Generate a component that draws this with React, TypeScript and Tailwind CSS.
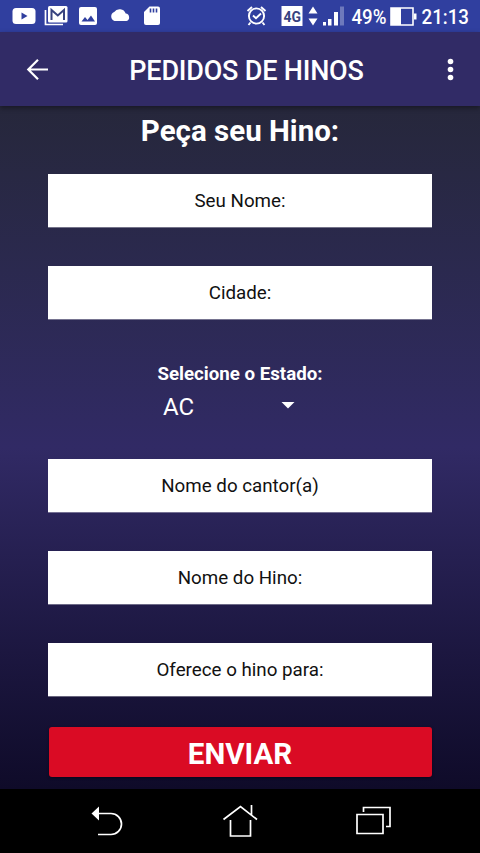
import React from "react";

function StatusBar() {
  return (
    <header className="flex h-8 shrink-0 items-center bg-[#303f9f] text-white">
      <svg width="480" height="32" viewBox="0 0 480 32" fill="#fff">
        <rect x="12.500" y="8" width="23" height="16" rx="3.500" />
        <path d="M21.500 12.500v7l6-3.500z" fill="#303f9f" />
        <path d="M45.500 10v14.500H63" fill="none" stroke="#fff" strokeWidth="1.700" />
        <rect x="48" y="6" width="19.500" height="16.500" rx="1.500" />
        <path d="M51.500 20V10l6.300 5.500L64 10v10" fill="none" stroke="#38437f" strokeWidth="2" />
        <rect x="79" y="7" width="18" height="18" rx="2" />
        <path d="M81.500 21.500l3.500-4.500 2.500 3 3.500-4.500 4 6z" fill="#303f9f" />
        <path d="M114.500 21a4.800 4.800 0 0 1-.3-9 6.500 6.500 0 0 1 11.500 1.600 3.800 3.800 0 0 1 .8 7.400z" />
        <path d="M149.500 6.500H158q2 0 2 2V23q0 2-2 2h-12q-2 0-2-2V12z" />
        <path d="M150.500 8.500v4M153.500 8.500v4M156.500 8.500v4" stroke="#303f9f" strokeWidth="1.600" />
        <g fill="none" stroke="#fff" strokeWidth="1.900">
          <circle cx="256.500" cy="16" r="7.600" />
          <path d="M247.500 11l4.500-4M265.500 11L261 7M250.500 22.500L248.500 25M262.500 22.500l2 2.500" />
          <path d="M253 15.500l3 2.700 5-4.700" />
        </g>
        <rect x="281.500" y="6" width="21" height="20" />
        <text x="283.500" y="21.500" textLength="17.500" lengthAdjust="spacingAndGlyphs" className="font-[Roboto] text-[15px] font-bold" fill="#38437f">4G</text>
        <path d="M308.500 13.500l4.500-7 4.500 7zM308.500 18.500l4.500 7 4.500-7z" />
        <path d="M323 22h3v3.500h-3zM328 19h3.500v6.500H328zM334 12h4v13.500h-4z" />
        <path d="M340 6.500h4v19h-4z" opacity=".3" />
        <text x="351.500" y="23.500" textLength="35" lengthAdjust="spacingAndGlyphs" className="font-[Roboto] text-[19.500px] font-medium">49%</text>
        <path d="M391 8h22v17h-22z" fill="none" stroke="#fff" strokeWidth="1.600" />
        <path d="M391 8h10v17h-10zM414 13.500h2.500v6H414z" />
        <text x="421.500" y="23.500" textLength="47.500" lengthAdjust="spacingAndGlyphs" className="font-[Roboto] text-[19.500px] font-medium">21:13</text>
      </svg>
    </header>
  );
}

function AppBar() {
  return (
    <div className="z-10 flex h-[74px] shrink-0 items-center justify-between bg-[#312b66] text-white shadow-[0_2px_5px_rgba(0,0,0,0.4)]">
      <button className="ml-[26px] w-7" aria-label="Voltar">
        <svg width="24" height="24" viewBox="0 0 24 24" fill="none" stroke="#fff" strokeWidth="2.200">
          <path d="M22 12.500H2.500M12 2.800l-9.700 9.700 9.700 9.700" />
        </svg>
      </button>
      <h1 className="pt-1 text-[27px] leading-8 font-medium tracking-[-0.2px] whitespace-nowrap">PEDIDOS DE HINOS</h1>
      <button className="mr-[17px] w-6" aria-label="Mais opções">
        <svg width="24" height="24" viewBox="0 0 24 24" fill="#fff">
          <circle cx="11.500" cy="4.500" r="2.800" />
          <circle cx="11.500" cy="12.500" r="2.800" />
          <circle cx="11.500" cy="20.500" r="2.800" />
        </svg>
      </button>
    </div>
  );
}

function Field({ label }: { label: string }) {
  return (
    <div className="flex h-[53px] w-96 shrink-0 items-center justify-center bg-white pt-0.5 text-[18.750px] text-[#111] shadow-[0_1px_0_rgba(255,255,255,0.35)]">
      <span className="whitespace-nowrap">{label}</span>
    </div>
  );
}

export default function App() {
  return (
    <div className="flex h-[853px] w-[480px] flex-col overflow-hidden bg-black font-[Roboto,sans-serif]">
      <StatusBar />
      <AppBar />
      <main className="flex h-[683px] shrink-0 flex-col items-center bg-linear-to-b from-[#26273b] via-[#312a65] to-[#0f0b29] text-white">
        <h2 className="mt-[9px] h-[59px] text-[29.500px] leading-8 font-bold whitespace-nowrap">Peça seu Hino:</h2>
        <div className="flex flex-col gap-[39px]">
          <Field label="Seu Nome:" />
          <Field label="Cidade:" />
        </div>
        <div className="flex h-[140px] shrink-0 flex-col items-center pt-[43px]">
          <label className="text-[18.700px] leading-6 font-bold whitespace-nowrap">Selecione o Estado:</label>
          <div className="mt-[5px] flex h-8 w-[154px] items-center justify-between pr-[22px] text-[24px]">
            <span>AC</span>
            <svg className="-mt-1" width="14" height="7" viewBox="0 0 14 7" fill="#fff"><path d="M0.500 0h13L7 6.500z" /></svg>
          </div>
        </div>
        <div className="flex flex-col gap-[39px]">
          <Field label="Nome do cantor(a)" />
          <Field label="Nome do Hino:" />
          <Field label="Oferece o hino para:" />
        </div>
        <button className="mt-[31px] h-[50px] w-[383px] shrink-0 rounded-[3px] bg-[#da0b24] pt-[3px] text-[29.500px] leading-8 font-bold shadow-[0_1px_3px_rgba(0,0,0,0.4)]">ENVIAR</button>
      </main>
      <nav className="flex h-16 shrink-0 items-center bg-black">
        <svg width="480" height="64" viewBox="0 0 480 64" fill="none" stroke="#fff" strokeWidth="1.700">
          <path d="M98 24.500h13a10.500 10.500 0 0 1 0 21H98" />
          <path d="M91.500 24.500l7.500-7v14z" fill="#fff" stroke="none" />
          <path d="M223.500 30.500l17-13 16.500 13M251.500 16v10M230.500 31v16h20V31" />
          <path d="M357 25.500h26v19h-26zM363.500 23v-4.500H390v19h-4" />
        </svg>
      </nav>
    </div>
  );
}
